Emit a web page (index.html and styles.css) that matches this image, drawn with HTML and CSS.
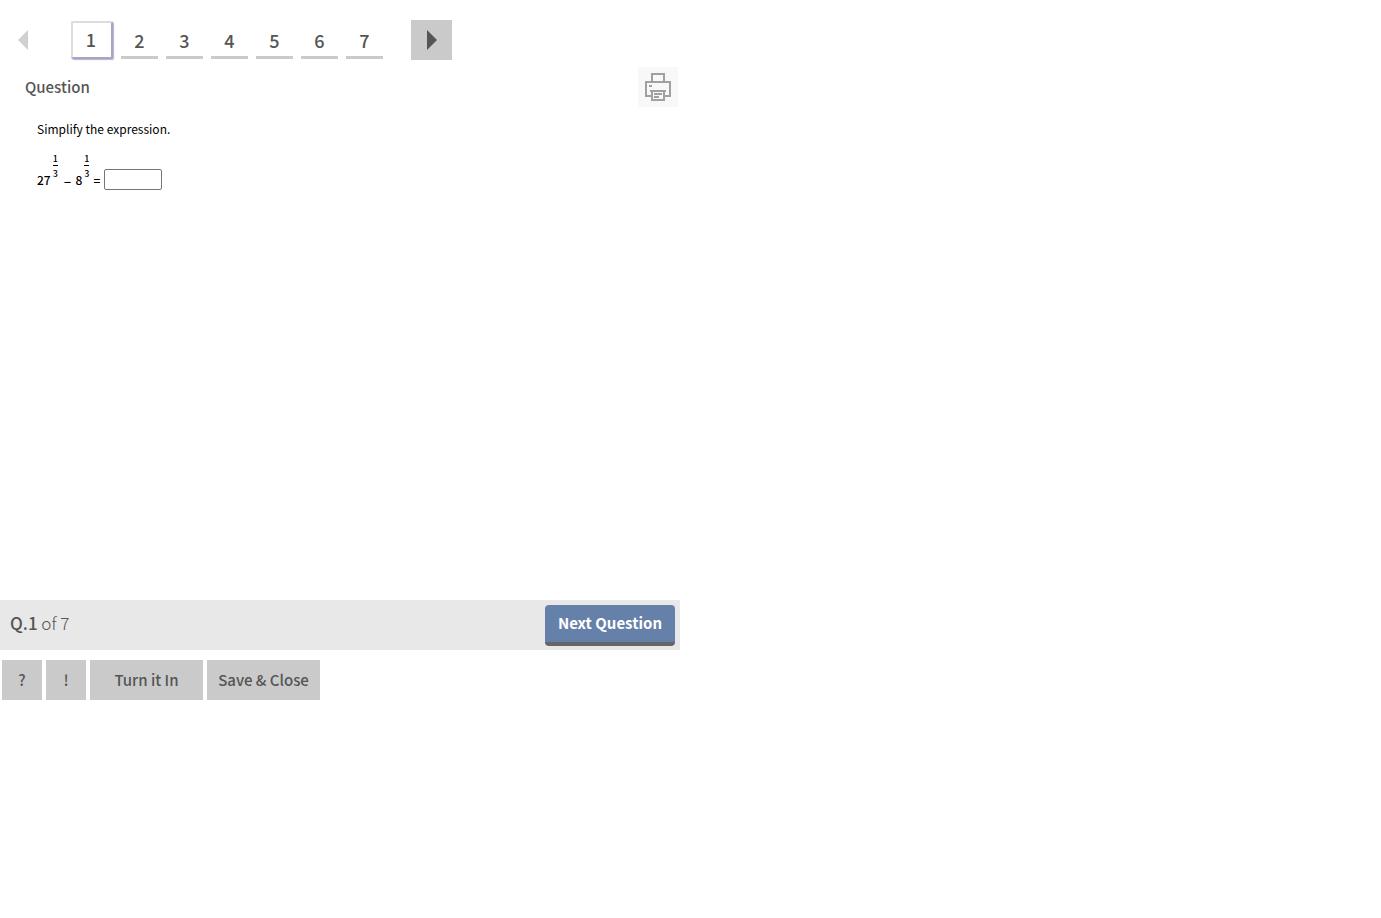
FILE: index.html
```html
<!DOCTYPE html>
<html lang="en">
<head>
    <meta charset="UTF-8">
    <meta name="viewport" content="width=device-width, initial-scale=1.0">
    <title>Question 1 of 7</title>
    <link rel="stylesheet" href="styles.css">
</head>
<body>

    <div class="assignment">
        <nav class="pager" aria-label="Questions">
            <button class="arrow prev" aria-label="Previous question" disabled>
                <svg width="10" height="20" viewBox="0 0 10 20"><path d="M10 0v20L0 10z" fill="currentColor"/></svg>
            </button>
            <div class="pages">
                <a class="page current" href="#q1" aria-current="page">1</a>
                <a class="page" href="#q2">2</a>
                <a class="page" href="#q3">3</a>
                <a class="page" href="#q4">4</a>
                <a class="page" href="#q5">5</a>
                <a class="page" href="#q6">6</a>
                <a class="page" href="#q7">7</a>
            </div>
            <button class="arrow next" aria-label="Next question">
                <svg width="10" height="20" viewBox="0 0 10 20"><path d="M0 0v20L10 10z" fill="currentColor"/></svg>
            </button>
        </nav>

        <main class="question">
            <header class="question-header">
                <h1>Question</h1>
                <button class="print" aria-label="Print">
                    <svg width="26" height="28" viewBox="0 0 26 28" fill="none" stroke="currentColor" stroke-width="2">
                        <path d="M7 9V1h12v8"/>
                        <path d="M7 23H1V9h24v14h-6"/>
                        <path d="M4 13h3"/>
                        <path d="M5 18h16"/>
                        <path d="M7 18v9h12v-9"/>
                        <path d="M9 21h8M9 24h5"/>
                    </svg>
                </button>
            </header>

            <div class="question-body">
                <p>Simplify the expression.</p>
                <div class="expression">
                    <span>27</span>
                    <span class="fraction"><span class="top">1</span><span>3</span></span>
                    <span class="minus">–</span>
                    <span>8</span>
                    <span class="fraction"><span class="top">1</span><span>3</span></span>
                    <label class="equals" for="answer">=</label>
                    <input class="answer" id="answer" type="text" autocomplete="off">
                </div>
            </div>
        </main>

        <div class="progress">
            <div class="count"><strong>Q.1</strong> of 7</div>
            <button class="next-question">Next Question</button>
        </div>

        <div class="actions">
            <button class="small">?</button>
            <button class="small">!</button>
            <button>Turn it In</button>
            <button>Save &amp; Close</button>
        </div>
    </div>

</body>
</html>
```
FILE: styles.css
```css
* {
    box-sizing: border-box;
}

body {
    margin: 0;
    background: white;
    color: #555;
    font-family: "Noto Sans CJK SC", "Open Sans", sans-serif;
    font-size: 15px;
    line-height: 24px;
}

button,
input {
    font: inherit;
    color: inherit;
}

button {
    border: none;
    padding: 0;
    cursor: pointer;
}

.assignment {
    max-width: 680px;
    padding-top: 20px;
}

/* Question numbers */
.pager {
    display: flex;
    align-items: flex-start;
}

.arrow {
    display: flex;
    align-items: center;
    justify-content: center;
    width: 41px;
    height: 40px;
    background: #cacaca;
}

.prev {
    background: none;
    color: #d0d0d0;
    margin-left: 2px;
    cursor: default;
}

.pages {
    display: flex;
    gap: 8px;
    margin: 0 28px;
}

.page {
    width: 37px;
    height: 39px;
    padding-top: 8px;
    border-bottom: 3px solid #cacaca;
    color: #555;
    font-size: 18px;
    font-weight: 500;
    text-align: center;
    text-decoration: none;
}

.current {
    width: 42px;
    height: 38px;
    margin-top: 1px;
    padding: 4px 2px 0 0;
    border: 2px solid #dcdcdc;
    border-right-color: #a9a4c4;
    border-bottom-color: #a9a4c4;
    border-radius: 2px;
    box-shadow: 1px 1px 1px #b4b0cc;
}

/* Question */
.question {
    min-height: 540px;
    padding: 7px 2px 0 25px;
}

.question-header {
    display: flex;
    align-items: center;
    justify-content: space-between;
}

h1 {
    margin: 0;
    font-size: 15px;
    font-weight: 500;
}

.print {
    display: flex;
    align-items: center;
    justify-content: center;
    width: 40px;
    height: 40px;
    background: #f8f8f8;
    color: #a0a0a0;
}

.question-body {
    padding: 12px;
    color: black;
    font-size: 12px;
    font-weight: 500;
    line-height: 20px;
}

.question-body p {
    margin: 0 0 14px;
    font-weight: 400;
}

.expression {
    display: flex;
    align-items: flex-end;
}

.fraction {
    display: flex;
    flex-direction: column;
    margin: 0 0 10px 2px;
    font-size: 9px;
    line-height: 12px;
    text-align: center;
}

.top {
    height: 13px;
    margin-bottom: 2px;
    border-bottom: 1px solid black;
}

.minus {
    margin: 0 4px 0 6px;
    font-size: 14px;
}

.equals {
    margin: 0 4px;
}

.answer {
    width: 58px;
    height: 21px;
    padding: 0 4px;
    border: 1px solid #767676;
    border-radius: 2px;
    background: white;
}

/* Progress bar */
.progress {
    display: flex;
    align-items: center;
    justify-content: space-between;
    height: 50px;
    padding: 0 5px 0 10px;
    background: #e8e8e8;
}

.count {
    padding-bottom: 4px;
    font-size: 17px;
    font-weight: 300;
}

.count strong {
    font-weight: 500;
}

.next-question {
    width: 130px;
    height: 41px;
    border-bottom: 4px solid #666;
    border-radius: 4px;
    background: #6681a9;
    color: white;
    font-weight: 700;
}

/* Buttons under the question */
.actions {
    display: flex;
    gap: 4px;
    padding: 10px 2px;
}

.actions button {
    width: 113px;
    height: 40px;
    background: #cacaca;
    font-weight: 500;
}

.actions .small {
    width: 40px;
}
```
